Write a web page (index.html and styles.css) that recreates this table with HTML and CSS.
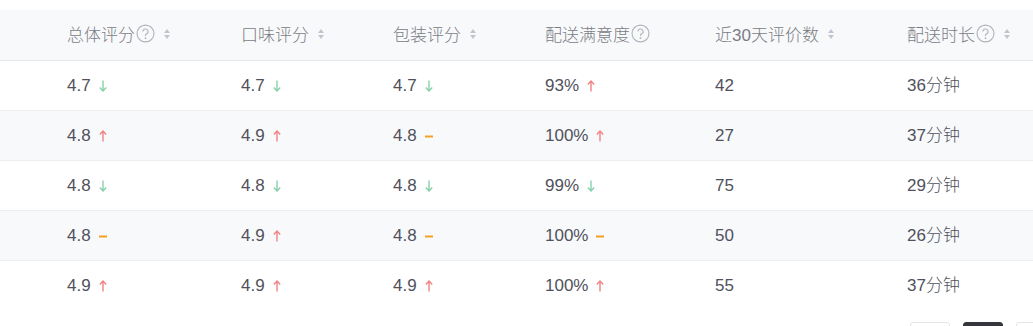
FILE: index.html
```html
<!DOCTYPE html>
<html lang="zh">
<head>
<meta charset="utf-8">
<link rel="stylesheet" href="styles.css">
</head>
<body>
<div class="wrap">
<table class="grid">
  <colgroup>
    <col class="c0"><col class="c1"><col class="c2"><col class="c3"><col class="c4"><col class="c5"><col class="c6">
  </colgroup>
  <thead>
    <tr>
      <th></th>
      <th><span class="h">总体评分<svg class="q" viewBox="0 0 18 18"><circle cx="9" cy="9" r="8" /><path d="M6.6 7.1a2.4 2.4 0 1 1 3.4 2.2c-.7.3-1 .8-1 1.5v.6" /><circle class="dot" cx="9" cy="13.4" r=".9"/></svg><svg class="sort" viewBox="0 0 8 12"><path d="M4 1 7 5H1z"/><path d="M4 11 7 7H1z"/></svg></span></th>
      <th><span class="h">口味评分<svg class="sort" viewBox="0 0 8 12"><path d="M4 1 7 5H1z"/><path d="M4 11 7 7H1z"/></svg></span></th>
      <th><span class="h">包装评分<svg class="sort" viewBox="0 0 8 12"><path d="M4 1 7 5H1z"/><path d="M4 11 7 7H1z"/></svg></span></th>
      <th><span class="h">配送满意度<svg class="q" viewBox="0 0 18 18"><circle cx="9" cy="9" r="8" /><path d="M6.6 7.1a2.4 2.4 0 1 1 3.4 2.2c-.7.3-1 .8-1 1.5v.6" /><circle class="dot" cx="9" cy="13.4" r=".9"/></svg></span></th>
      <th><span class="h">近30天评价数<svg class="sort" viewBox="0 0 8 12"><path d="M4 1 7 5H1z"/><path d="M4 11 7 7H1z"/></svg></span></th>
      <th><span class="h">配送时长<svg class="q" viewBox="0 0 18 18"><circle cx="9" cy="9" r="8" /><path d="M6.6 7.1a2.4 2.4 0 1 1 3.4 2.2c-.7.3-1 .8-1 1.5v.6" /><circle class="dot" cx="9" cy="13.4" r=".9"/></svg><svg class="sort" viewBox="0 0 8 12"><path d="M4 1 7 5H1z"/><path d="M4 11 7 7H1z"/></svg></span></th>
    </tr>
  </thead>
  <tbody>
    <tr>
      <td></td>
      <td><span class="v">4.7<i class="dn"></i></span></td><td><span class="v">4.7<i class="dn"></i></span></td><td><span class="v">4.7<i class="dn"></i></span></td><td><span class="v">93%<i class="up"></i></span></td><td><span class="v">42</span></td><td><span class="v">36<b>分钟</b></span></td>
    </tr>
    <tr class="alt">
      <td></td>
      <td><span class="v">4.8<i class="up"></i></span></td><td><span class="v">4.9<i class="up"></i></span></td><td><span class="v">4.8<i class="eq"></i></span></td><td><span class="v">100%<i class="up"></i></span></td><td><span class="v">27</span></td><td><span class="v">37<b>分钟</b></span></td>
    </tr>
    <tr>
      <td></td>
      <td><span class="v">4.8<i class="dn"></i></span></td><td><span class="v">4.8<i class="dn"></i></span></td><td><span class="v">4.8<i class="dn"></i></span></td><td><span class="v">99%<i class="dn"></i></span></td><td><span class="v">75</span></td><td><span class="v">29<b>分钟</b></span></td>
    </tr>
    <tr class="alt">
      <td></td>
      <td><span class="v">4.8<i class="eq"></i></span></td><td><span class="v">4.9<i class="up"></i></span></td><td><span class="v">4.8<i class="eq"></i></span></td><td><span class="v">100%<i class="eq"></i></span></td><td><span class="v">50</span></td><td><span class="v">26<b>分钟</b></span></td>
    </tr>
    <tr>
      <td></td>
      <td><span class="v">4.9<i class="up"></i></span></td><td><span class="v">4.9<i class="up"></i></span></td><td><span class="v">4.9<i class="up"></i></span></td><td><span class="v">100%<i class="up"></i></span></td><td><span class="v">55</span></td><td><span class="v">37<b>分钟</b></span></td>
    </tr>
  </tbody>
</table>
<div class="pager">
  <span class="pg"></span>
  <span class="pg cur"></span>
  <span class="pg"></span>
</div>
</div>
</body>
</html>
```
FILE: styles.css
```css
html, body {
  margin: 0;
  padding: 0;
  background: #fff;
  overflow: hidden;
}
body {
  font-family: "Liberation Sans", "Noto Sans CJK SC", sans-serif;
  font-size: 17px;
  color: #50515b;
}
.wrap {
  padding-top: 10px;
  width: 1060px;
}
.grid {
  border-collapse: collapse;
  table-layout: fixed;
  width: 1060px;
}
.c0 { width: 67px; }
.c1 { width: 174px; }
.c2 { width: 152px; }
.c3 { width: 152px; }
.c4 { width: 170px; }
.c5 { width: 192px; }
.c6 { width: 153px; }
th {
  height: 50px;
  padding: 0;
  background: #f8f9fb;
  border-bottom: 1px solid #e6e8ec;
  text-align: left;
  font-weight: 300;
  color: #7b7c84;
  white-space: nowrap;
}
.h {
  display: inline-flex;
  align-items: center;
  height: 20px;
}
.q {
  width: 19px;
  height: 19px;
  margin-left: 1px;
  fill: none;
  stroke: #b4b5bb;
  stroke-width: 1.1;
}
.q .dot { fill: #b4b5bb; stroke: none; }
.sort {
  width: 8px;
  height: 12px;
  margin-left: 8px;
  fill: #c3c5cc;
}
td {
  height: 49px;
  padding: 0;
  border-bottom: 1px solid #eceef1;
  white-space: nowrap;
  vertical-align: middle;
}
.v {
  display: flex;
  align-items: center;
  height: 20px;
  line-height: 20px;
}
.v b {
  font-weight: 300;
}
tr.alt td { background: #f8f9fb; }
tbody tr:last-child td { border-bottom: none; }
i {
  display: block;
  flex: none;
  width: 8px;
  height: 12px;
  margin-left: 8px;
  background-repeat: no-repeat;
  background-position: center;
}
i.dn {
  background-image: url("data:image/svg+xml;utf8,<svg xmlns='http://www.w3.org/2000/svg' viewBox='0 0 8 12'><path d='M4 0.5V11M0.8 7.6 4 11 7.2 7.6' fill='none' stroke='%2388d0aa' stroke-width='1.4'/></svg>");
}
i.up {
  background-image: url("data:image/svg+xml;utf8,<svg xmlns='http://www.w3.org/2000/svg' viewBox='0 0 8 12'><path d='M4 11.5V1M0.8 4.4 4 1 7.2 4.4' fill='none' stroke='%23ef8585' stroke-width='1.4'/></svg>");
}
i.eq {
  background-image: url("data:image/svg+xml;utf8,<svg xmlns='http://www.w3.org/2000/svg' viewBox='0 0 8 12'><path d='M0 6.5H8' fill='none' stroke='%23f5a023' stroke-width='2'/></svg>");
}
.pager {
  display: flex;
  gap: 13px;
  padding-left: 910px;
  margin-top: 12px;
}
.pg {
  width: 38px;
  height: 30px;
  border: 1px solid #e3e5ea;
  border-radius: 3px;
  background: #fff;
  flex: none;
}
.pg.cur {
  background: #35363c;
  border-color: #35363c;
}
```
